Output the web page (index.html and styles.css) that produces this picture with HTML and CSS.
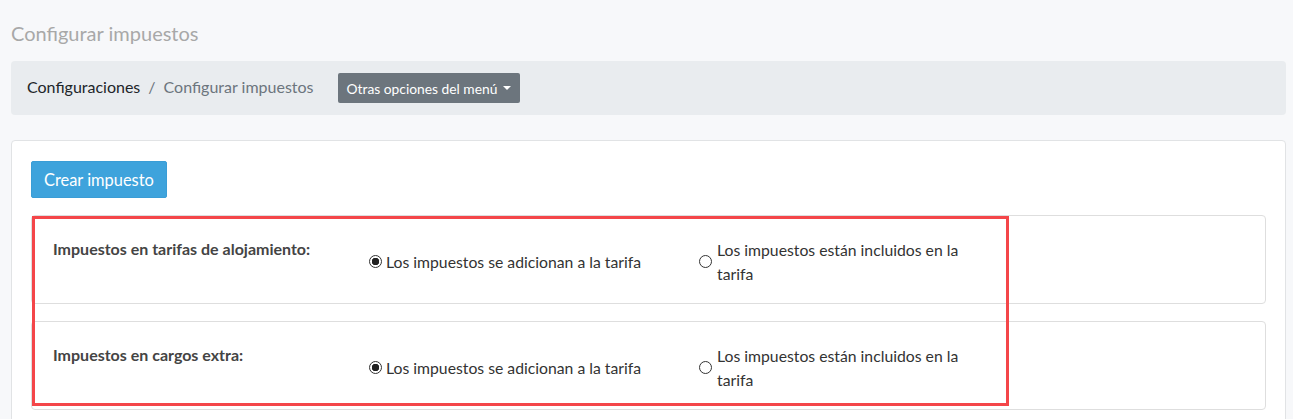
FILE: index.html
```html
<!DOCTYPE html>
<html lang="es">
<head>
    <meta charset="UTF-8">
    <meta name="viewport" content="width=device-width, initial-scale=1.0">
    <title>Configurar impuestos</title>
    <link rel="stylesheet" href="styles.css">
</head>
<body>
    <h2 class="page-title">Configurar impuestos</h2>

    <nav class="breadcrumb-bar">
        <ol class="breadcrumb">
            <li class="crumb">Configuraciones</li>
            <li class="crumb-sep">/</li>
            <li class="crumb active">Configurar impuestos</li>
        </ol>
        <button class="btn-menu" type="button">Otras opciones del menú <span class="caret"></span></button>
    </nav>

    <div class="card">
        <button class="btn-create" type="button">Crear impuesto</button>

        <!-- tax settings -->
        <div class="tax-card">
            <div class="tax-label">Impuestos en tarifas de alojamiento:</div>
            <label class="radio-opt">
                <input type="radio" name="tax-room" checked>
                <span>Los impuestos se adicionan a la tarifa</span>
            </label>
            <label class="radio-opt wide-gap">
                <input type="radio" name="tax-room">
                <span>Los impuestos están incluidos en la tarifa</span>
            </label>
        </div>

        <div class="tax-card">
            <div class="tax-label">Impuestos en cargos extra:</div>
            <label class="radio-opt">
                <input type="radio" name="tax-extra" checked>
                <span>Los impuestos se adicionan a la tarifa</span>
            </label>
            <label class="radio-opt wide-gap">
                <input type="radio" name="tax-extra">
                <span>Los impuestos están incluidos en la tarifa</span>
            </label>
        </div>

        <div class="highlight"></div>
    </div>
</body>
</html>
```

FILE: styles.css
```css
body {
    font-family: 'Lato', 'Liberation Sans', sans-serif;
    margin: 0;
    padding: 0 7px 0 11px;
    background-color: #f7f8fa;
    color: #333;
}
.page-title {
    margin: 21px 0 16px;
    font-size: 20px;
    line-height: 24px;
    font-weight: 400;
    color: #a8a8a8;
}
.breadcrumb-bar {
    display: flex;
    align-items: center;
    height: 54px;
    padding: 0 16px;
    background: #e9ecef;
    border-radius: 4px;
}
.breadcrumb {
    display: flex;
    margin: 0;
    padding: 0;
    list-style: none;
    font-size: 16px;
    margin-top: -3px;
}
.crumb {
    color: #212529;
}
.crumb.active {
    color: #6c757d;
}
.crumb-sep {
    color: #6c757d;
    padding: 0 8px;
}
.btn-menu {
    margin-left: 24px;
    height: 30px;
    padding: 0 9px;
    background: #6c757d;
    color: #fff;
    border: none;
    border-radius: 2px;
    font-family: inherit;
    font-size: 13.8px;
    display: flex;
    align-items: center;
}
.caret {
    display: inline-block;
    margin-left: 6px;
    border-top: 4px solid #fff;
    border-left: 4px solid transparent;
    border-right: 4px solid transparent;
}
.card {
    position: relative;
    margin-top: 25px;
    background: #fff;
    border: 1px solid #e1e3e5;
    border-radius: 4px;
    padding: 20px 19px 30px;
}
.btn-create {
    display: block;
    height: 37px;
    padding: 0 12px;
    background: #3ea3dc;
    color: #fff;
    border: 1px solid #3a9dd6;
    border-radius: 2px;
    font-family: inherit;
    font-size: 16.4px;
    margin-bottom: 17px;
}
.tax-card {
    display: grid;
    grid-template-columns: 316px 330px 295px;
    align-items: center;
    padding: 22px 20px 17px 21px;
    border: 1px solid #dedede;
    border-radius: 4px;
    margin-bottom: 17px;
    min-height: 48px;
}
.tax-label {
    align-self: start;
    font-size: 16px;
    line-height: 22px;
    font-weight: 700;
    color: #444;
}
.radio-opt {
    display: flex;
    align-items: center;
    gap: 4px;
    font-size: 15.75px;
    line-height: 24px;
    color: #333;
    margin-top: -1px;
}
.radio-opt.wide-gap {
    gap: 5px;
}
.radio-opt input {
    appearance: none;
    flex: none;
    width: 13px;
    height: 13px;
    margin: 0;
    border: 1px solid #333;
    border-radius: 50%;
    background: #fff;
}
.radio-opt input:checked {
    background: radial-gradient(circle, #222 0, #222 3.5px, #fff 4px);
}
.highlight {
    position: absolute;
    left: 20px;
    top: 75px;
    width: 977px;
    height: 190px;
    box-sizing: border-box;
    border: 3px solid #f44649;
}
```
